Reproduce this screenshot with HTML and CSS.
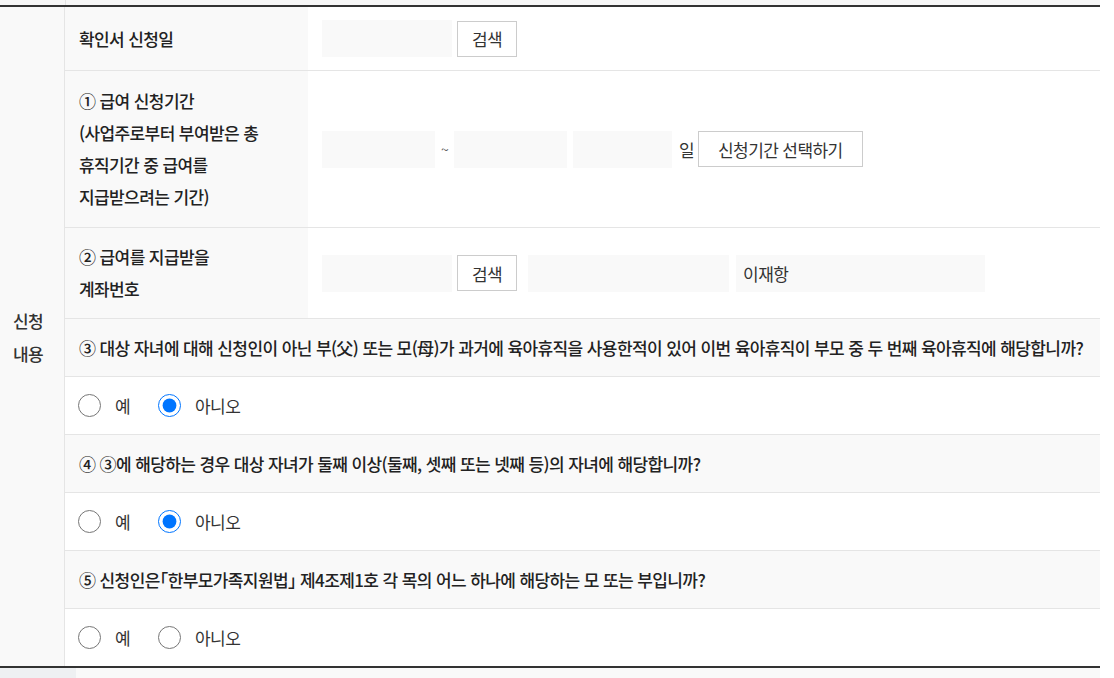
FILE: index.html
```html
<!DOCTYPE html>
<html lang="ko">

<head>
    <meta charset="utf-8">
    <title>육아휴직 급여 신청</title>
    <link rel="stylesheet" href="styles.css">
</head>

<body>
    <div class="top-strip"><span class="top-side"></span></div>

    <div class="form-table">
        <div class="side">신청<br>내용</div>
        <div class="rows">
            <div class="row">
                <div class="label">확인서 신청일</div>
                <div class="field">
                    <input class="box w130" type="text">
                    <button class="btn" type="button">검색</button>
                </div>
            </div>
            <div class="row">
                <div class="label tall">① 급여 신청기간<br>(사업주로부터 부여받은 총<br>휴직기간 중 급여를<br>지급받으려는 기간)</div>
                <div class="field">
                    <input class="box w113" type="text">
                    <span class="tilde">~</span>
                    <input class="box w113" type="text">
                    <input class="box w99 ml6" type="text">
                    <span class="unit">일</span>
                    <button class="btn wide" type="button">신청기간 선택하기</button>
                </div>
            </div>
            <div class="row">
                <div class="label">② 급여를 지급받을<br>계좌번호</div>
                <div class="field">
                    <input class="box w130" type="text">
                    <button class="btn" type="button">검색</button>
                    <input class="box w201 ml11" type="text">
                    <input class="box w249 ml7" type="text" value="이재항">
                </div>
            </div>
            <div class="question">③ 대상 자녀에 대해 신청인이 아닌 부(父) 또는 모(母)가 과거에 육아휴직을 사용한적이 있어 이번 육아휴직이 부모 중 두 번째 육아휴직에 해당합니까?</div>
            <div class="answer">
                <label class="radio"><input type="radio" name="q3"> 예</label>
                <label class="radio"><input type="radio" name="q3" checked> 아니오</label>
            </div>
            <div class="question">④ ③에 해당하는 경우 대상 자녀가 둘째 이상(둘째, 셋째 또는 넷째 등)의 자녀에 해당합니까?</div>
            <div class="answer">
                <label class="radio"><input type="radio" name="q4"> 예</label>
                <label class="radio"><input type="radio" name="q4" checked> 아니오</label>
            </div>
            <div class="question">⑤ 신청인은<span class="halt">「</span>한부모가족지원법<span class="halt">」</span> 제4조제1호 각 목의 어느 하나에 해당하는 모 또는 부입니까?</div>
            <div class="answer last">
                <label class="radio"><input type="radio" name="q5"> 예</label>
                <label class="radio"><input type="radio" name="q5"> 아니오</label>
            </div>
        </div>
    </div>

    <div class="bottom-strip"><span class="bottom-tab"></span></div>
</body>

</html>
```

FILE: styles.css
```css
body {
    font-family: "Noto Sans CJK KR", "Noto Sans", sans-serif;
    font-size: 17px;
    letter-spacing: -0.6px;
    color: #333;
    background: #fff;
    margin: 0;
}

.top-strip {
    width: 1100px;
    height: 5px;
    background: #f7f7f7;
    display: flex;
}

.top-side {
    width: 65px;
    border-right: 1px solid #e3e3e3;
}

.form-table {
    width: 1100px;
    display: flex;
    border-top: 2px solid #333;
    border-bottom: 2px solid #333;
}

.side {
    width: 65px;
    flex-shrink: 0;
    background: #f9f9f9;
    border-right: 1px solid #e5e5e5;
    display: flex;
    align-items: center;
    padding-left: 13px;
    box-sizing: border-box;
    line-height: 33px;
    font-weight: 500;
}

.rows {
    flex: 1;
}

.row {
    display: flex;
    border-bottom: 1px solid #e5e5e5;
}

.label {
    width: 243px;
    flex-shrink: 0;
    box-sizing: border-box;
    background: #f9f9f9;
    padding: 13px 14px;
    line-height: 32px;
    font-weight: 500;
    color: #222;
    display: flex;
    align-items: center;
}

.label.tall {
    padding: 14px 14px;
}

.field {
    flex: 1;
    display: flex;
    align-items: center;
    padding: 13px 14px;
}

.box {
    height: 37px;
    border: 0;
    background: #f9f9f9;
    font-family: inherit;
    font-size: 17px;
    letter-spacing: -0.6px;
    color: #333;
    padding: 0 7px;
    box-sizing: border-box;
}

.w99 { width: 99px; }
.w113 { width: 113px; }
.w130 { width: 130px; }
.w201 { width: 201px; }
.w249 { width: 249px; }
.ml6 { margin-left: 6px; }
.ml7 { margin-left: 7px; }
.ml11 { margin-left: 11px; }

.tilde {
    width: 19px;
    text-align: center;
    font-size: 14px;
    color: #555;
}

.unit {
    margin: 0 4px 0 7px;
}

.btn {
    height: 36px;
    margin-left: 5px;
    padding: 0 14px;
    border: 1px solid #ccc;
    background: #fff;
    font-family: inherit;
    font-size: 17px;
    letter-spacing: -0.6px;
    color: #333;
}

.btn.wide {
    padding: 0 19px;
}

.unit + .btn {
    margin-left: 0;
}

.question {
    height: 57px;
    display: flex;
    align-items: center;
    padding-left: 14px;
    background: #f9f9f9;
    border-bottom: 1px solid #e5e5e5;
    font-weight: 500;
    color: #222;
    white-space: pre;
}

.halt {
    font-feature-settings: "halt";
}

.answer {
    height: 57px;
    display: flex;
    align-items: center;
    padding-left: 13px;
    border-bottom: 1px solid #e5e5e5;
}

.answer.last {
    border-bottom: 0;
}

.radio {
    display: flex;
    align-items: center;
    margin-right: 28px;
}

.radio input {
    width: 23px;
    height: 23px;
    margin: 0 14px 0 0;
}

.bottom-strip {
    width: 1100px;
    height: 10px;
    background: #f9f9f9;
    display: flex;
}

.bottom-tab {
    width: 76px;
    background: #eef0f2;
}
```
